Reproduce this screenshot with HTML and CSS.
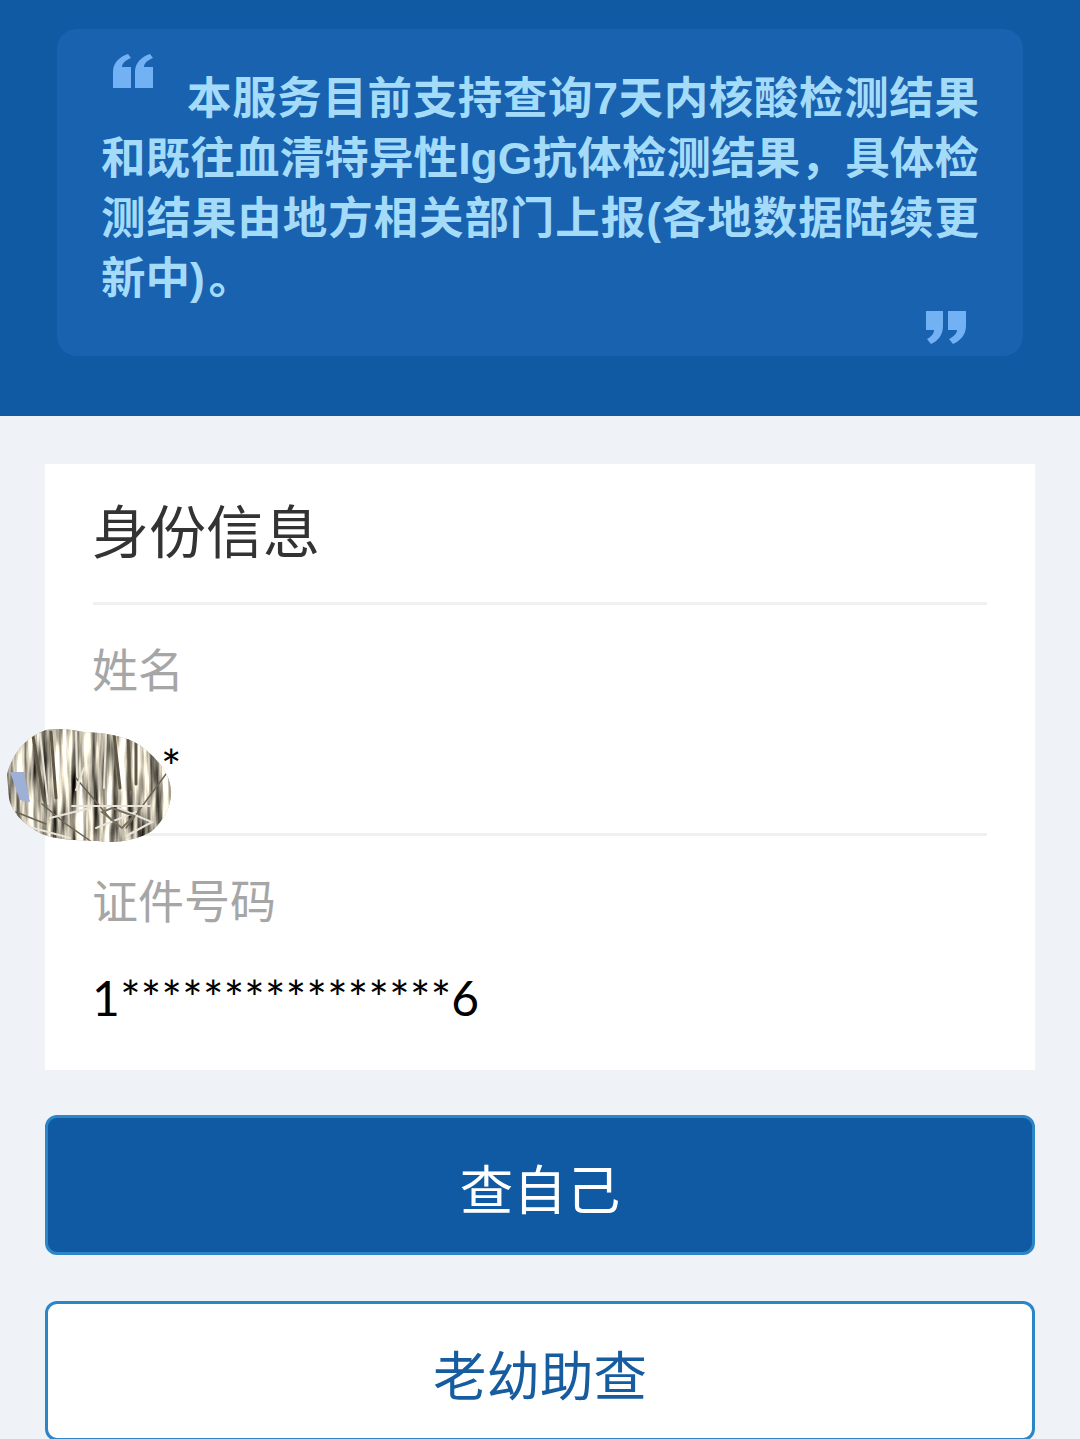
FILE: index.html
```html
<!DOCTYPE html>
<html lang="zh-CN">
<head>
<meta charset="utf-8">
<title>身份信息</title>
<link rel="stylesheet" href="styles.css">
</head>
<body>
<div class="page">
  <header class="hero">
    <div class="notice">
      <svg class="quote quote-open" viewBox="0 0 40 34" aria-hidden="true">
        <path d="M0 34V18C0 9 6 3 15 0L18 4C13 6 9 9 9 13H18V34ZM22 34V18C22 9 28 3 37 0L40 4C35 6 31 9 31 13H40V34Z"/>
      </svg>
      <p class="notice-text">本服务目前支持查询7天内核酸检测结果和既往血清特异性IgG抗体检测结果，具体检测结果由地方相关部门上报(各地数据陆续更新中)&#8202;。</p>
      <svg class="quote quote-close" viewBox="0 0 40 34" aria-hidden="true">
        <path d="M0 0H17V15C17 24 12 30 5 33L1 28C5 26 8 23 8 19H0ZM22 0H40V15C40 24 34 30 27 33L23 28C27 26 31 23 31 19H22Z"/>
      </svg>
    </div>
  </header>
  <main class="content">
    <section class="panel">
      <h1 class="panel-title"><span class="title-text">身份信息</span></h1>
      <div class="field field-name">
        <div class="label"><span class="label-text">姓名</span></div>
        <div class="value value-name">*</div>
      </div>
      <div class="field field-id">
        <div class="label"><span class="label-text">证件号码</span></div>
        <div class="value">1****************6</div>
      </div>
      <svg class="smudge" viewBox="0 0 166 116" aria-hidden="true">
        <defs>
          <clipPath id="blob"><path d="M1 47C6 24 22 8 40 2C52 0 62 1 78 4C100 5 125 8 140 22C152 32 164 46 165 62C166 78 158 92 146 103C132 112 110 116 92 113C70 112 50 112 36 106C20 98 6 86 3 70Z"/></clipPath>
          <filter id="foil" x="0" y="0" width="100%" height="100%" color-interpolation-filters="sRGB">
            <feTurbulence type="fractalNoise" baseFrequency="0.14 0.014" numOctaves="3" seed="7"/>
            <feColorMatrix type="matrix" values="2.1 0 0 0 -0.33  2.05 0 0 0 -0.33  1.9 0 0 0 -0.32  0 0 0 0 1"/>
          </filter>
        </defs>
        <g clip-path="url(#blob)">
          <rect width="166" height="116" fill="#b9b3a6"/>
          <rect width="166" height="116" filter="url(#foil)"/>
          <path d="M4 44L14 72L24 74L18 44Z" fill="#9fb0d6"/>
          <g fill="none" stroke-linecap="round">
            <path d="M27 8L38 72M45 4L50 70M108 6L114 60M122 6L124 62M130 14L130 56" stroke="#5e5747" stroke-width="3"/>
            <path d="M34 6L42 76M70 4L72 84M100 6L98 60" stroke="#e6e2d6" stroke-width="2"/>
            <path d="M36 76L60 96L86 114M10 84L40 96M70 50L112 100M160 46L120 100" stroke="#6a6354" stroke-width="1.5"/>
            <path d="M66 78H144M44 90L84 80M112 80L146 94L120 108M90 100L130 84M78 40L70 62M20 98L64 110" stroke="#e8e4da" stroke-width="2"/>
            <path d="M96 84L116 100L128 88L106 80Z" stroke="#77705f" stroke-width="2"/>
          </g>
        </g>
      </svg>
    </section>
    <button class="btn btn-primary" type="button">查自己</button>
    <button class="btn btn-outline" type="button">老幼助查</button>
  </main>
</div>
</body>
</html>
```
FILE: styles.css
```css
* { box-sizing: border-box; }

html, body {
  margin: 0;
  height: 1439px;
  overflow: hidden;
  background: #eff3f7;
}

body {
  font-family: "Noto Sans CJK SC", "Liberation Sans", sans-serif;
}

.page {
  height: 1439px;
  overflow: hidden;
}

.hero {
  height: 416px;
  padding: 29px 57px 0 57px;
  background: #0f5aa3;
}

.notice {
  position: relative;
  height: 327px;
  padding: 40px 44px 0 44px;
  border-radius: 20px;
  background: #1862b0;
}

.notice-text {
  margin: 0;
  color: #a3dbf9;
  font-family: "Liberation Sans", "Noto Sans CJK SC", sans-serif;
  font-size: 44.5px;
  font-weight: 700;
  line-height: 60px;
  text-indent: 86px;
  text-align: justify;
}

.quote {
  position: absolute;
  width: 40px;
  height: 34px;
  fill: #73b1f5;
}

.quote-open { left: 56px; top: 25px; }
.quote-close { left: 869px; top: 282px; }

.content {
  padding: 48px 45px 0;
}

.panel {
  position: relative;
  height: 606px;
  padding: 0 48px;
  background: #fff;
}

.panel-title {
  height: 141px;
  margin: 0;
  border-bottom: 3px solid #f0f0f0;
  color: #333;
  font-size: 57px;
  font-weight: 400;
  line-height: 128px;
}

.title-text,
.label-text {
  display: block;
  margin-left: -1px;
}

.field-name {
  height: 231px;
  border-bottom: 3px solid #f0f0f0;
}

.label {
  height: 131px;
  padding-top: 29px;
  color: #a6a6a6;
  font-size: 46px;
  line-height: 66px;
}

.value {
  margin-left: -1px;
  color: #000;
  font-family: "Lato", "Open Sans", sans-serif;
  font-size: 48px;
  letter-spacing: 0.3px;
  line-height: 62px;
}

.value-name {
  padding-left: 69px;
}

.smudge {
  position: absolute;
  left: -39px;
  top: 264px;
  width: 166px;
  height: 116px;
}

.btn {
  display: block;
  width: 100%;
  height: 140px;
  border-radius: 12px;
  border: 3px solid #2c86c6;
  font-family: "Noto Sans CJK SC", sans-serif;
  font-size: 53.5px;
  font-weight: 400;
  line-height: 1;
  padding: 3px 0 0;
}

.btn-primary {
  margin-top: 45px;
  background: #0f5aa3;
  color: #fff;
}

.btn-outline {
  margin-top: 46px;
  background: #fff;
  color: #165c9f;
}
```
